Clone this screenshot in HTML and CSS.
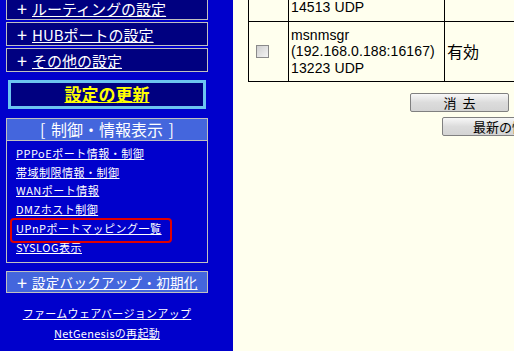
FILE: index.html
```html
<!DOCTYPE html>
<html lang="ja">
  <head>
    <meta charset="UTF-8" />
    <title>UPnPポートマッピング一覧</title>
    <link rel="stylesheet" href="styles.css">
  </head>
  <body>
    <!-- 左メニュー -->
    <aside class="side">
      <div class="menu first"><span class="plus">+</span><a href="#">ルーティングの設定</a></div>
      <div class="menu"><span class="plus">+</span><a href="#">HUBポートの設定</a></div>
      <div class="menu"><span class="plus">+</span><a href="#">その他の設定</a></div>

      <div class="update"><a href="#">設定の更新</a></div>

      <section class="group">
        <h2 class="group_title">[ 制御・情報表示 ]</h2>
        <ul class="links">
          <li><a href="#">PPPoEポート情報・制御</a></li>
          <li><a href="#">帯域制限情報・制御</a></li>
          <li><a href="#">WANポート情報</a></li>
          <li><a href="#">DMZホスト制御</a></li>
          <li class="mark"><a href="#">UPnPポートマッピング一覧</a></li>
          <li><a href="#">SYSLOG表示</a></li>
        </ul>
      </section>

      <div class="menu light"><span class="plus">+</span><a href="#">設定バックアップ・初期化</a></div>

      <div class="foot">
        <a href="#">ファームウェアバージョンアップ</a>
        <a href="#">NetGenesisの再起動</a>
      </div>
    </aside>

    <!-- 本文 -->
    <main class="main">
      <table class="map">
        <tr>
          <td class="c1"></td>
          <td class="c2">14513 UDP</td>
          <td class="c3"></td>
        </tr>
        <tr>
          <td class="c1"><span class="check"></span></td>
          <td class="c2">msnmsgr<br>(192.168.0.188:16167)<br>13223 UDP</td>
          <td class="c3 state">有効</td>
        </tr>
      </table>
      <div class="btn_row"><button class="btn del">消&nbsp;&nbsp;去</button></div>
      <div class="btn_row"><button class="btn reload">最新の情報に更新</button></div>
    </main>
  </body>
</html>
```

FILE: styles.css
```css
* {
  box-sizing: border-box;
  margin: 0;
  padding: 0;
  list-style: none;
}
body {
  display: flex;
  height: 351px;
  overflow: hidden;
  background-color: #ffffee;
  font-family: "Noto Sans CJK JP", sans-serif;
}
a {
  color: #fff;
}

/* 左メニュー */
.side {
  flex: 0 0 233px;
  background-color: #0000cc;
  color: #fff;
}
.menu {
  display: flex;
  align-items: center;
  width: 202px;
  height: 24px;
  margin: 2px 0 0 6px;
  padding-left: 10px;
  border: 1px solid #c0c0c0;
  background-color: #000080;
  font-size: 15px;
  white-space: nowrap;
}
.menu.first {
  margin-top: -4px;
}
.plus {
  width: 15px;
  font-size: 18px;
  line-height: 1;
}
.menu.light {
  height: 22px;
  margin-top: 8px;
  background-color: #4466dd;
  font-size: 13.5px;
  letter-spacing: 0.3px;
}
.update {
  width: 198px;
  height: 29px;
  margin: 8px 0 0 8px;
  border: 3px solid #6cc4f0;
  background-color: #000080;
  text-align: center;
  font-size: 17px;
  font-weight: bold;
  line-height: 22px;
}
.update a {
  color: #ffff00;
}
.group {
  width: 202px;
  margin: 9px 0 0 6px;
  border: 1px solid #c0c0c0;
}
.group_title {
  height: 22px;
  border-bottom: 1px solid #c0c0c0;
  background-color: #4466dd;
  text-align: center;
  font-size: 16px;
  font-weight: normal;
  line-height: 21px;
  word-spacing: 2px;
}
.links {
  height: 121px;
  padding: 3px 0 0 9px;
  font-size: 11px;
  line-height: 18.7px;
  letter-spacing: 0.5px;
  white-space: nowrap;
}
.links .mark {
  position: relative;
}
.links .mark::after {
  content: "";
  position: absolute;
  left: -6px;
  top: -1px;
  width: 158px;
  height: 21px;
  border: 2px solid #e00000;
  border-radius: 4px;
}
.foot {
  display: flex;
  flex-direction: column;
  align-items: center;
  width: 214px;
  padding-top: 10px;
  font-size: 11px;
  line-height: 20px;
  letter-spacing: 0.3px;
}

/* 本文 */
.main {
  flex: 1;
  overflow: hidden;
}
.map {
  width: 423px;
  margin: -7px 0 0 15px;
  border-collapse: collapse;
  font-family: "Liberation Sans", "Noto Sans CJK JP", sans-serif;
  font-size: 14px;
  letter-spacing: 0.1px;
  line-height: 16.5px;
}
.map td {
  border: 1px solid #000;
  padding: 5px 2px;
  vertical-align: middle;
}
.map .c1 {
  width: 40px;
  padding-left: 7px;
}
.map .c2 {
  width: 156px;
  white-space: nowrap;
}
.map .state {
  font-family: "Noto Sans CJK JP", sans-serif;
  font-size: 16px;
}
.check {
  display: block;
  width: 13px;
  height: 13px;
  border: 1px solid #8a8a8a;
  background: linear-gradient(135deg, #cfcfcf, #f4f4f4);
}
.btn_row {
  margin-top: 11px;
}
.btn_row + .btn_row {
  margin-top: 5px;
}
.btn {
  display: block;
  height: 19px;
  border: 1px solid #808080;
  border-radius: 2px;
  background: linear-gradient(#f8f8f8, #dcdcdc 50%, #d4d4d4);
  font-family: "Noto Sans CJK JP", sans-serif;
  font-size: 13px;
  line-height: 16px;
  color: #000;
  white-space: nowrap;
}
.btn.del {
  width: 99px;
  margin-left: 177px;
}
.btn.reload {
  width: 150px;
  margin-left: 209px;
  padding-left: 30px;
  text-align: left;
}
```
